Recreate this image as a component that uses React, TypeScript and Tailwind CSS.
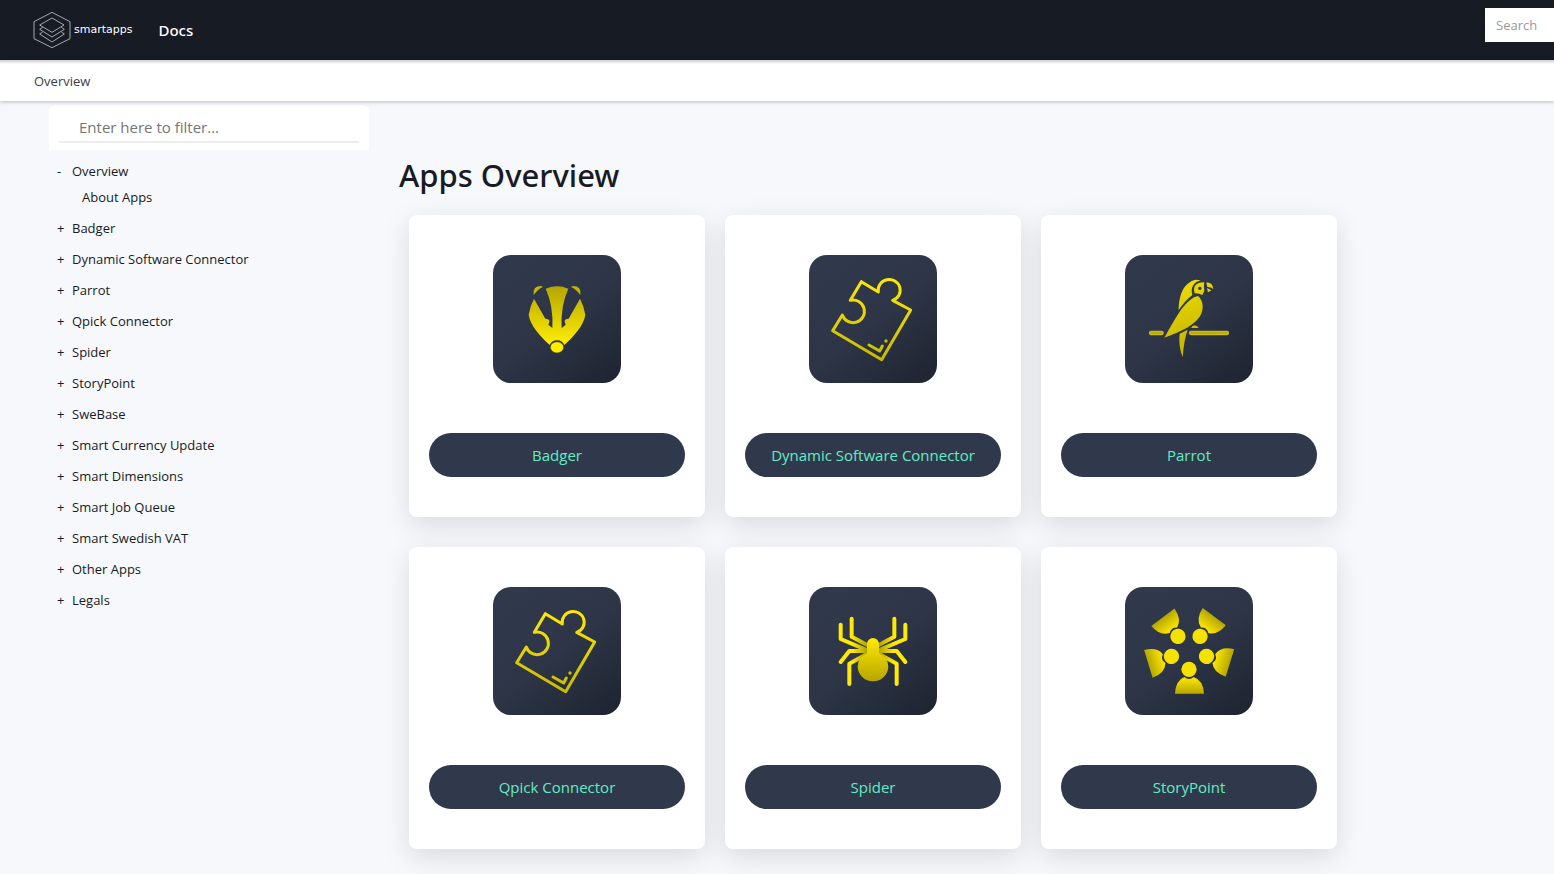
import type { ReactNode } from 'react';

const Logo = () => (
  <svg viewBox="102 36 108 108" className="h-9 w-9 overflow-visible" fill="none" stroke="#c9ccd1" strokeWidth="2.4" aria-hidden="true">
    <path d="M156 37 210 65V116L156 143 102 116V65Z" />
    <path d="M156 54 192 75 156 97 119 75Z" />
    <path d="M128 82 119 88 156 111 193 88 184 82" />
    <path d="M128 96 119 102 156 126 193 102 184 96" />
  </svg>
);

const Tile = ({ children }: { children: ReactNode }) => (
  <svg viewBox="24 24 384 384" className="h-32 w-32" aria-hidden="true">
    <defs>
      <linearGradient id="tile" x1="0.2" y1="0.1" x2="0.9" y2="1">
        <stop offset="0" stopColor="#30394b" />
        <stop offset="0.45" stopColor="#2d3547" />
        <stop offset="1" stopColor="#1f2531" />
      </linearGradient>
      <linearGradient id="rise" x1="0" y1="0" x2="0" y2="1">
        <stop offset="0" stopColor="#b5a600" />
        <stop offset="1" stopColor="#ffee00" />
      </linearGradient>
      <linearGradient id="fall" x1="0" y1="0" x2="0" y2="1">
        <stop offset="0" stopColor="#ffea00" />
        <stop offset="1" stopColor="#b5a600" />
      </linearGradient>
      <linearGradient id="line" gradientUnits="userSpaceOnUse" x1="216" y1="95" x2="216" y2="340">
        <stop offset="0" stopColor="#ffea00" />
        <stop offset="1" stopColor="#c9b900" />
      </linearGradient>
      <linearGradient id="wing" gradientUnits="userSpaceOnUse" x1="250" y1="260" x2="180" y2="110">
        <stop offset="0" stopColor="#c9b900" />
        <stop offset="1" stopColor="#efdd00" />
      </linearGradient>
      <linearGradient id="legs" gradientUnits="userSpaceOnUse" x1="112" y1="0" x2="216" y2="0">
        <stop offset="0.4" stopColor="#ffea00" />
        <stop offset="1" stopColor="#8f850b" />
      </linearGradient>
    </defs>
    <rect x="24" y="24" width="384" height="384" rx="54" fill="url(#tile)" />
    {children}
  </svg>
);

const BadgerIcon = () => (
  <Tile>
    <path
      fill="url(#rise)"
      d="M147 155 181 215Q195 216 193 224L190 233 202 243Q206 178 182 125 216 111 250 125 226 178 230 243L242 233 239 224Q237 216 251 215L285 155Q296 175 301 203C296 237 266 267 238 294Q232 280 216 280T194 294C166 267 136 237 131 203Q136 175 147 155Z"
    />
    <path fill="#c5b500" d="M146 144Q142 117 168 117L174 120Q158 127 146 144ZM286 144Q290 117 264 117L258 120Q274 127 286 144Z" />
    <ellipse cx="216" cy="301" rx="20" ry="17" fill="#ffee00" stroke="#4d4a19" strokeWidth="2" />
  </Tile>
);

const PuzzleIcon = () => (
  <Tile>
    <g fill="none" stroke="url(#line)" strokeWidth="9" strokeLinejoin="round" strokeLinecap="round">
      <path d="M181 104 232 135A33 32 0 1 1 275 160L329 189 242 338 95 251 124 204A34 34 0 1 0 148 160Z" />
      <path d="M204 294 236 312 244 297" />
    </g>
    <circle cx="255" cy="282" r="5" fill="#d0c000" />
  </Tile>
);

const ParrotIcon = () => (
  <Tile>
    <g fill="url(#wing)">
      <path d="M185 190C185 145 200 105 237 98L251 100C230 106 220 122 226 144Q202 163 185 190Z" />
      <path fillRule="evenodd" d="M233 139C226 117 239 105 262 106Q259 119 262 131L256 144Q245 138 233 139ZM248 119a5 5 0 1 0 1 0Z" />
      <path d="M268 107Q286 105 289 126 280 119 271 120ZM270 123 283 130 273 136Z" />
      <path d="M142 272Q172 217 192 188 220 151 243 147C260 161 261 187 249 208Q238 226 209 243 180 259 142 272Z" />
      <path d="M188 260 212 248Q201 278 197 331 183 294 188 260ZM222 243Q230 228 244 241V243Z" />
    </g>
    <path d="M102 258H134M222 258H330" stroke="#cdbd08" strokeWidth="13" strokeLinecap="round" />
    <path d="M102 258H134M222 258H330" stroke="#a99c0c" strokeWidth="3" strokeLinecap="round" />
  </Tile>
);

const SpiderLegs = () => (
  <path
    d="M152 119V173L206 202M119 137V180L200 214M119 249 145 216H204M145 315V254L204 221"
    fill="none"
    stroke="url(#legs)"
    strokeWidth="12"
    strokeLinecap="round"
    strokeLinejoin="round"
  />
);

const SpiderIcon = () => (
  <Tile>
    <SpiderLegs />
    <g transform="translate(432 0) scale(-1 1)">
      <SpiderLegs />
    </g>
    <path fill="url(#fall)" d="M198 196A18 19 0 0 1 234 196V222Q262 238 262 262A46 45 0 0 1 170 262Q170 238 198 222Z" />
  </Tile>
);

const StoryPointIcon = () => (
  <Tile>
    {[0, 73, 143, 217, 287].map((angle) => (
      <g key={angle} transform={`rotate(${angle} 216 216)`}>
        <path fill="url(#fall)" d="M174 344Q176 304 202 294 216 306 230 294 259 304 261 344Z" />
        <circle cx="216" cy="271" r="23" fill="#f5e200" />
      </g>
    ))}
  </Tile>
);

const sections = [
  { name: 'Overview', children: ['About Apps'] },
  { name: 'Badger' },
  { name: 'Dynamic Software Connector' },
  { name: 'Parrot' },
  { name: 'Qpick Connector' },
  { name: 'Spider' },
  { name: 'StoryPoint' },
  { name: 'SweBase' },
  { name: 'Smart Currency Update' },
  { name: 'Smart Dimensions' },
  { name: 'Smart Job Queue' },
  { name: 'Smart Swedish VAT' },
  { name: 'Other Apps' },
  { name: 'Legals' },
];

const apps = [
  { name: 'Badger', Icon: BadgerIcon },
  { name: 'Dynamic Software Connector', Icon: PuzzleIcon },
  { name: 'Parrot', Icon: ParrotIcon },
  { name: 'Qpick Connector', Icon: PuzzleIcon },
  { name: 'Spider', Icon: SpiderIcon },
  { name: 'StoryPoint', Icon: StoryPointIcon },
];

const Header = () => (
  <header className="flex h-[60px] items-start overflow-hidden bg-[#171b24] pl-[34px] text-white">
    <a href="#" className="flex h-[60px] items-center gap-1">
      <Logo />
      <span className="font-['DejaVu_Sans',sans-serif] text-[11px]">smartapps</span>
    </a>
    <a href="#" className="ml-[26px] font-['Noto_Sans',sans-serif] text-[15px] leading-[60px] font-medium">Docs</a>
    <input
      type="search"
      aria-label="Search"
      placeholder="Search"
      className="mt-2 -mr-[91px] ml-auto h-[34px] w-40 shrink-0 bg-white px-[11px] text-[13px] text-gray-800 outline-none placeholder:text-[#999]"
    />
  </header>
);

const Sidebar = () => (
  <aside className="w-80 shrink-0">
    <div className="rounded-t-md bg-white px-[10px] pt-2 pb-[7px]">
      <input
        type="text"
        aria-label="Filter"
        placeholder="Enter here to filter..."
        className="block h-[30px] w-full border-b-2 border-[#ededed] px-5 text-[15px] outline-none placeholder:text-[#757575]"
      />
    </div>
    <ul className="space-y-[5px] pt-2 pl-2 text-[13px] leading-[26px] text-[#171b24]">
      {sections.map(({ name, children }) => (
        <li key={name}>
          <button type="button" className="flex text-left">
            <span className="w-[15px]">{children ? '-' : '+'}</span>
            {name}
          </button>
          {children && (
            <ul className="pl-[25px]">
              {children.map((child) => (
                <li key={child}><a href="#">{child}</a></li>
              ))}
            </ul>
          )}
        </li>
      ))}
    </ul>
  </aside>
);

const App = () => (
  <div className="min-h-screen bg-[#f7f8fc] font-['Segoe_UI','Open_Sans',sans-serif]">
    <Header />
    <nav className="relative h-[41px] bg-white px-[34px] text-[13px] leading-[42px] text-[#3c404a] shadow-[0_1px_4px_rgba(0,0,0,0.25),inset_0_5px_3px_-3px_rgba(0,0,0,0.2)]">
      <a href="#">Overview</a>
    </nav>
    <div className="flex gap-[30px] pt-1 pl-[49px]">
      <Sidebar />
      <main className="min-w-0 flex-1 pt-[46px] pb-6">
        <h1 className="font-['Noto_Sans',sans-serif] text-[31px] leading-12 font-medium text-[#171b24]">Apps Overview</h1>
        <div className="mt-4 flex flex-wrap gap-x-5 gap-y-[30px] px-[10px]">
          {apps.map(({ name, Icon }) => (
            <article key={name} className="flex w-[296px] flex-col items-center gap-[50px] rounded-lg bg-white px-5 py-10 shadow-[0_8px_28px_rgba(0,0,0,0.12)]">
              <Icon />
              <a href="#" className="w-full rounded-full bg-[#30394b] text-center text-[15px] leading-11 text-[#64ebc4]">{name}</a>
            </article>
          ))}
        </div>
      </main>
    </div>
  </div>
);

export default App;
